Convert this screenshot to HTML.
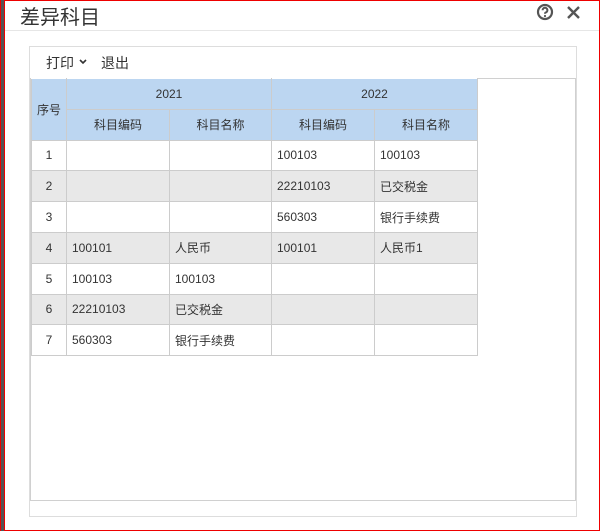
<!DOCTYPE html>
<html><head><style>
*{margin:0;padding:0;box-sizing:border-box}
body{width:600px;height:531px;position:relative;background:#fff;font-family:"Liberation Sans","Noto Sans CJK SC",sans-serif;overflow:hidden}
.frame{position:absolute;left:0;top:0;width:600px;height:531px;border:1px solid #e00;border-left:none}
.lred{position:absolute;left:0;top:0;width:1px;height:531px;background:#e00}
.ldark{position:absolute;left:1px;top:0;width:3px;height:531px;background:#555}
.lred2{position:absolute;left:4px;top:0;width:1px;height:531px;background:#e00}
.title{position:absolute;left:20px;top:1px;font-size:20px;color:#333}
.tline{position:absolute;left:5px;right:1px;top:30px;height:1px;background:#e6e6e6}
.panel{position:absolute;left:29px;top:46px;width:548px;height:471px;border:1px solid #ddd}
.tb{position:absolute;left:46px;top:53px;font-size:14px;color:#333}
.grid{position:absolute;left:30px;top:78px;width:546px;height:423px;border:1px solid #d0d0d0}
table{position:absolute;left:31px;top:78px;border-collapse:collapse;font-size:12px;color:#333}
td{border:1px solid #ccc;height:30.8px;padding:0 5px}
td:first-child{text-align:center}
.h td{background:#bcd6f1;text-align:center;border-color:#fff #ccc #ccc #ccc}
tr.g td{background:#e8e8e8}
</style></head><body>
<div class="frame"></div><div class="lred"></div><div class="ldark"></div><div class="lred2"></div>
<div class="title">差异科目</div>
<svg style="position:absolute;left:536px;top:3px" width="18" height="18" viewBox="0 0 18 18"><circle cx="9" cy="9" r="7" fill="none" stroke="#555" stroke-width="2.2"/><path d="M6.6 7.2a2.4 2.4 0 1 1 3.3 2.2c-.7.3-.9.7-.9 1.4" fill="none" stroke="#555" stroke-width="2"/><circle cx="9" cy="13" r="1.1" fill="#555"/></svg>
<svg style="position:absolute;left:566px;top:5px" width="15" height="15" viewBox="0 0 15 15"><path d="M2 2L13 13M13 2L2 13" stroke="#555" stroke-width="2.4"/></svg>
<div class="tline"></div>
<div class="panel"></div>
<div class="tb">打印</div>
<svg style="position:absolute;left:79px;top:59px" width="8" height="6" viewBox="0 0 8 6"><path d="M1 1L4 4L7 1" fill="none" stroke="#333" stroke-width="1.6"/></svg>
<div class="tb" style="left:101px">退出</div>
<div class="grid"></div>
<table>
<colgroup><col style="width:35px"><col style="width:103px"><col style="width:102px"><col style="width:103px"><col style="width:103px"></colgroup>
<tr class="h"><td rowspan="2">序号</td><td colspan="2">2021</td><td colspan="2">2022</td></tr>
<tr class="h"><td>科目编码</td><td>科目名称</td><td>科目编码</td><td>科目名称</td></tr>
<tr><td>1</td><td></td><td></td><td>100103</td><td>100103</td></tr>
<tr class="g"><td>2</td><td></td><td></td><td>22210103</td><td>已交税金</td></tr>
<tr><td>3</td><td></td><td></td><td>560303</td><td>银行手续费</td></tr>
<tr class="g"><td>4</td><td>100101</td><td>人民币</td><td>100101</td><td>人民币1</td></tr>
<tr><td>5</td><td>100103</td><td>100103</td><td></td><td></td></tr>
<tr class="g"><td>6</td><td>22210103</td><td>已交税金</td><td></td><td></td></tr>
<tr><td>7</td><td>560303</td><td>银行手续费</td><td></td><td></td></tr>
</table>
</body></html>
